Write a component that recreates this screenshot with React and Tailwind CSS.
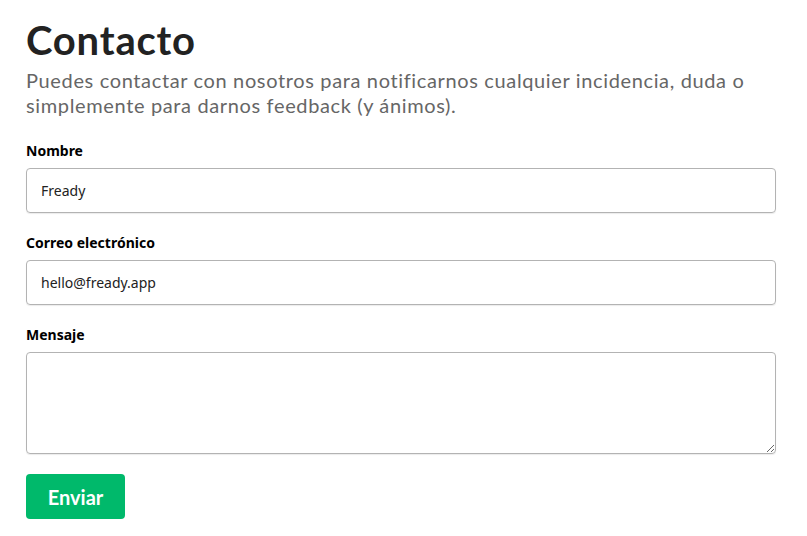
import React from "react";

export default function App() {
  return (
    <div className="min-h-[536px] bg-white px-[26px] pt-[14px]">
      <div className="w-[750px]">
        <h1 className="font-['Lato',sans-serif] text-[40px] font-bold leading-[52px] tracking-[0.8px] text-[#222]">
          Contacto
        </h1>
        <p className="mt-[2px] font-['Lato',sans-serif] text-[20px] leading-[25px] tracking-[0.64px] text-[#666]">
          Puedes contactar con nosotros para notificarnos cualquier incidencia, duda o simplemente para darnos feedback (y ánimos).
        </p>

        <form className="mt-[23px] font-['Noto_Sans',sans-serif]" onSubmit={(e) => e.preventDefault()}>
          <label className="block text-[14px] font-bold leading-[20px] text-black">Nombre</label>
          <input
            defaultValue="Fready"
            className="mt-[7px] block h-[45px] w-full rounded-[4px] border border-[#b3b3b3] px-[14px] text-[14px] text-[#222] shadow-[0_1px_1px_rgba(0,0,0,0.08)] outline-none"
          />

          <label className="mt-[20px] block text-[14px] font-bold leading-[20px] text-black">
            Correo electrónico
          </label>
          <input
            defaultValue="hello@fready.app"
            className="mt-[7px] block h-[45px] w-full rounded-[4px] border border-[#b3b3b3] px-[14px] text-[14px] text-[#222] shadow-[0_1px_1px_rgba(0,0,0,0.08)] outline-none"
          />

          <label className="mt-[20px] block text-[14px] font-bold leading-[20px] text-black">Mensaje</label>
          <textarea className="mt-[7px] block h-[102px] w-full rounded-[4px] border border-[#b3b3b3] px-[14px] py-[10px] text-[14px] shadow-[0_1px_1px_rgba(0,0,0,0.08)] outline-none" />

          <button
            type="submit"
            className="mt-[20px] h-[45px] w-[99px] rounded-[4px] bg-[#00b96b] font-['Lato',sans-serif] text-[20px] font-bold text-white"
          >
            Enviar
          </button>
        </form>
      </div>
    </div>
  );
}
